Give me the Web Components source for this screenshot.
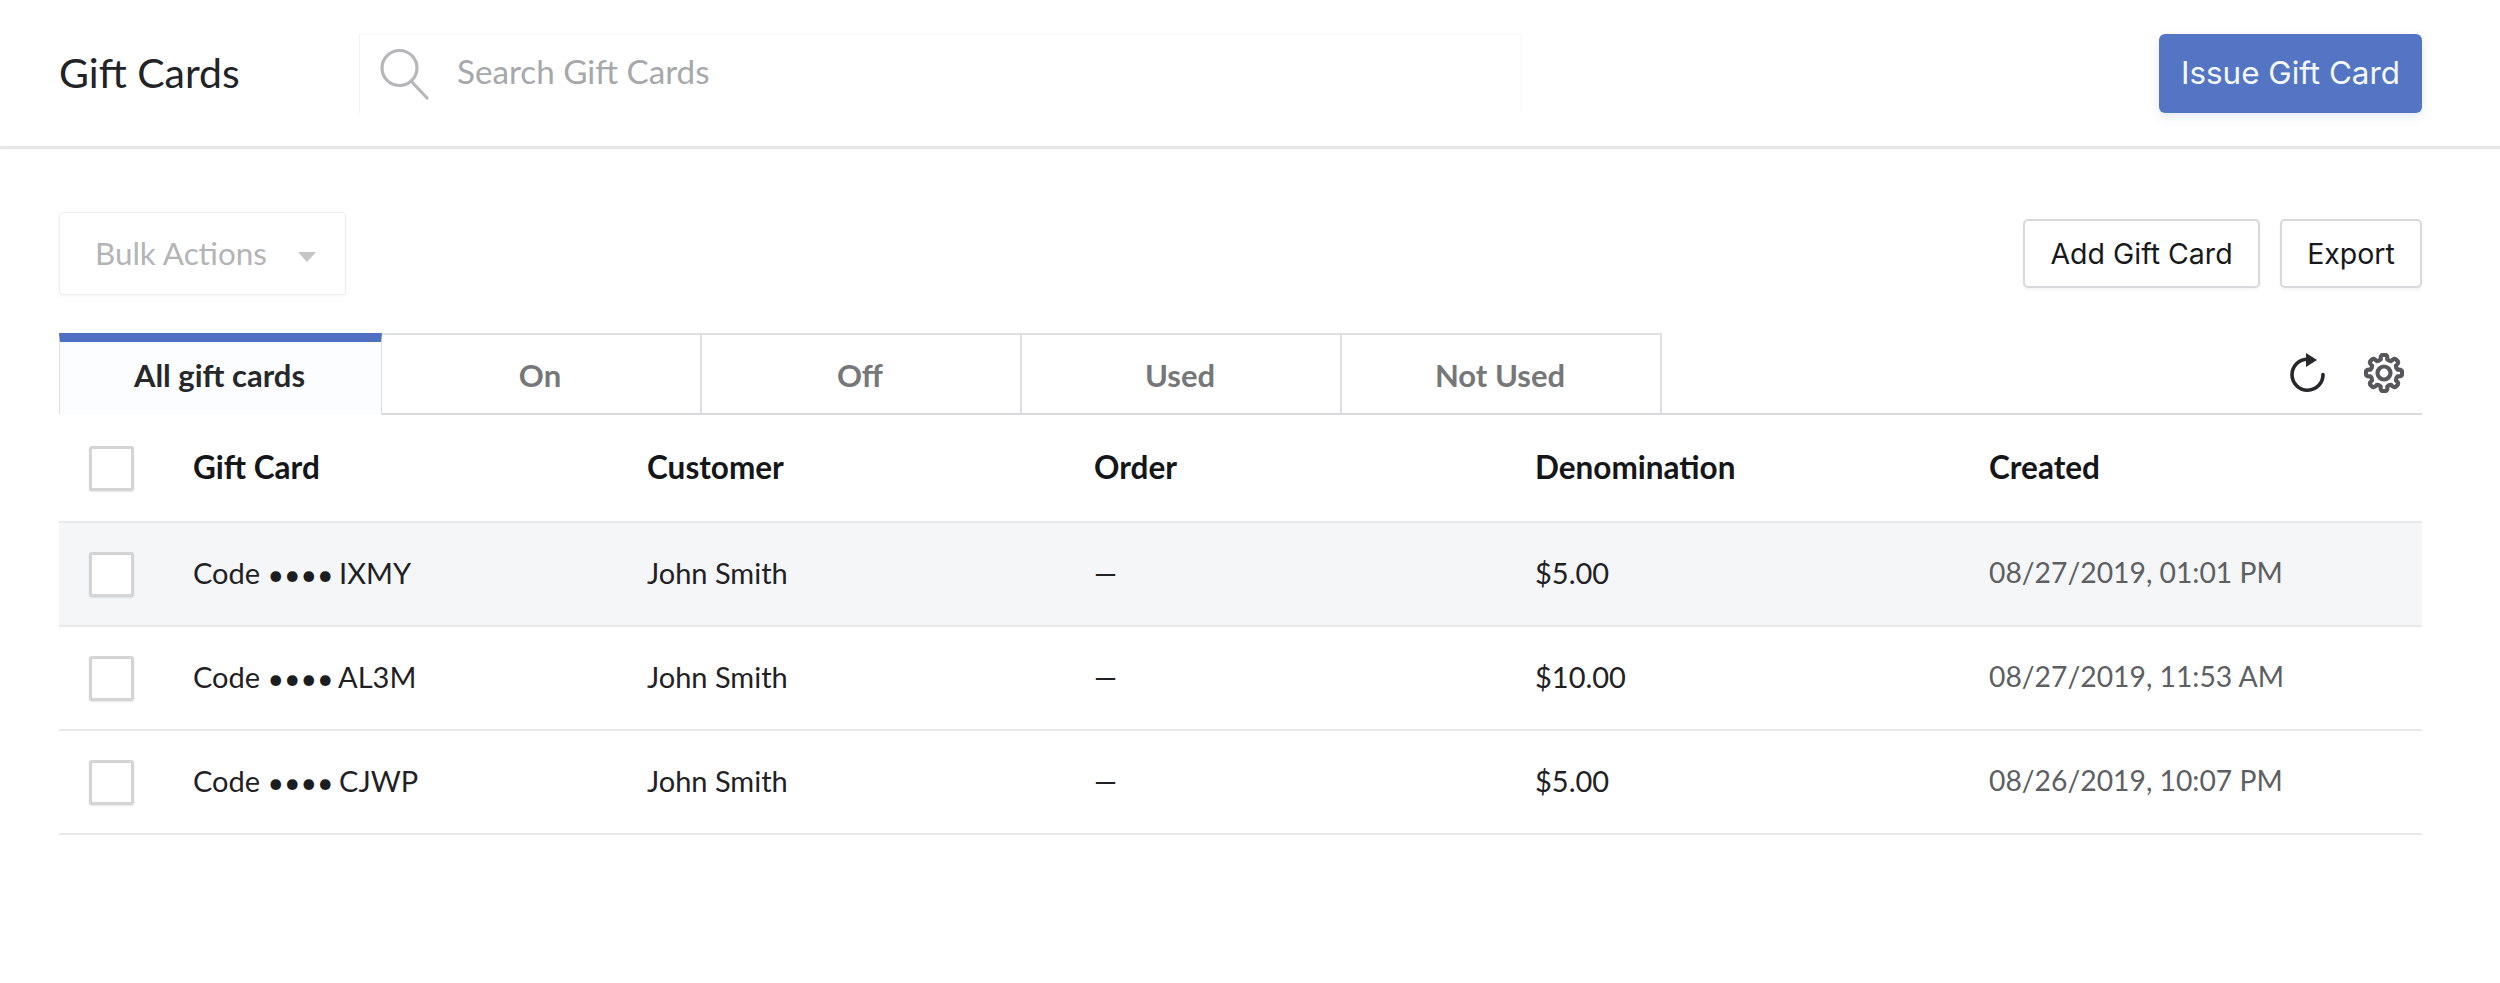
<!DOCTYPE html>
<html><head><meta charset="utf-8"><style>
html,body{margin:0;padding:0;background:#fff}
body{font-family:Lato,"Liberation Sans",sans-serif;width:2500px;height:983px;overflow:hidden}
</style></head><body>
<gc-header></gc-header>
<gc-toolbar></gc-toolbar>
<gc-tabs></gc-tabs>
<gc-table>
<gc-row head code="Gift Card" customer="Customer" order="Order" amount="Denomination" created="Created"></gc-row>
<gc-row hover code="IXMY" customer="John Smith" order="—" amount="$5.00" created="08/27/2019, 01:01 PM"></gc-row>
<gc-row code="AL3M" customer="John Smith" order="—" amount="$10.00" created="08/27/2019, 11:53 AM"></gc-row>
<gc-row code="CJWP" customer="John Smith" order="—" amount="$5.00" created="08/26/2019, 10:07 PM"></gc-row>
</gc-table>
<script>
function def(name,css,html){
  customElements.define(name,class extends HTMLElement{
    connectedCallback(){
      if(this.shadowRoot)return;
      const r=this.attachShadow({mode:'open'});
      r.innerHTML='<style>'+css+'</style>'+(typeof html==='function'?html(this):html);
    }
  });
}
const BTN_FONT='Inter,"Open Sans",sans-serif';
function gearPath(){
  const cx=20,cy=20,ro=18,ri=14,n=8;let d='';
  for(let i=0;i<n;i++){
    const s=2*Math.PI/n,a=i*s-Math.PI/2;
    const P=(r,t)=>(cx+r*Math.cos(t)).toFixed(2)+' '+(cy+r*Math.sin(t)).toFixed(2);
    if(i===0)d+='M'+P(ri,a-s*.30);
    d+='Q'+P(ro+1,a-s*.26)+' '+P(ro,a)+'Q'+P(ro+1,a+s*.26)+' '+P(ri,a+s*.30)+'Q'+P(ri-1.2,a+s*.5)+' '+P(ri,a+s*.70);
  }
  return d+'Z';
}
def('gc-header',`
:host{display:flex;box-sizing:border-box;height:149px;align-items:center;border-bottom:3px solid #e6e7e8;padding:0 78px 0 59px;box-shadow:0 1px 2px rgba(0,0,0,.03)}
h1{margin:0 0 2px;font:400 41px/1 Lato,sans-serif;color:#212326;width:300px;flex:none}
.search{box-sizing:border-box;width:1163px;height:80px;flex:none;display:flex;align-items:center;border:2px solid #fafafa;border-bottom:0;border-left:1px solid #f1f1f1;border-radius:2px 2px 0 0;padding-left:20px;color:#a6a8ab;font:400 33.2px/1 Lato,sans-serif;margin-top:-1px}
.search span{padding-bottom:3px}
svg{width:50px;height:52px;flex:none;margin-right:27px}
.sp{flex:1}
button{all:unset;box-sizing:border-box;width:263px;height:79px;background:#5475c4;color:#f5f8fd;border-radius:6px;text-align:center;font:400 31.4px/79px ${BTN_FONT};box-shadow:0 4px 12px rgba(60,80,140,.12);margin-top:1px}
`,`<h1>Gift Cards</h1>
<div class="search"><svg viewBox="0 0 50 52" fill="none" stroke="#b6b7b9" stroke-width="3.2" stroke-linecap="round"><circle cx="19.5" cy="20" r="17.5"/><path d="M31 33l16 17"/></svg><span>Search Gift Cards</span></div>
<div class="sp"></div><button>Issue Gift Card</button>`);
def('gc-toolbar',`
:host{display:flex;align-items:flex-start;justify-content:space-between;box-sizing:border-box;height:184px;padding:63px 78px 0 59px}
.bulk{box-sizing:border-box;width:287px;height:83px;border:1px solid #eceded;border-radius:4px;display:flex;align-items:center;padding-left:35px;color:#b3b4b6;font:400 31.4px/1 Lato,sans-serif;box-shadow:0 1px 3px rgba(0,0,0,.05)}
.car{width:0;height:0;border:9px solid transparent;border-top:10px solid #c4c5c7;border-bottom:0;margin-left:31px;margin-top:6px}
.r{display:flex;gap:20px;margin-top:7px}
button{all:unset;box-sizing:border-box;height:69px;background:#fff;border:2px solid #d7d9dc;border-radius:5px;text-align:center;color:#17191c;font:400 28.5px/65px ${BTN_FONT};box-shadow:0 2px 3px rgba(60,70,90,.06)}
.a{width:237px}.e{width:142px}
`,`<div class="bulk"><span>Bulk Actions</span><i class="car"></i></div>
<div class="r"><button class="a">Add Gift Card</button><button class="e">Export</button></div>`);
def('gc-tabs',`
:host{display:flex;box-sizing:border-box;height:82px;margin:0 78px 0 59px;position:relative;border-bottom:2px solid #d8dce0}
.t{box-sizing:border-box;width:320px;height:80px;border-top:2px solid #dfe2e5;border-right:2px solid #dbe0e4;display:flex;align-items:center;justify-content:center;color:#757779;font:700 31px/1 Lato,sans-serif;padding:3px 2px 0 0}
.t.on{width:323px;height:82px;border-top:9px solid #4f6fc2;border-left:1px solid #dbe0e4;border-right:1px solid #dbe0e4;color:#26282b;background:#fcfdfe;padding:0 2px 7px 0}
.ic{margin-left:auto;display:flex;gap:36px;padding:20px 18px 0 0;align-items:flex-start}
.ic svg{display:block;width:40px;height:40px}
`,`<div class="t on">All gift cards</div><div class="t">On</div><div class="t">Off</div><div class="t">Used</div><div class="t">Not Used</div>
<div class="ic">
<svg viewBox="0 0 40 40" fill="none"><path d="M35 21.5A15.5 15.5 0 1 1 19.5 6.2" stroke="#26282b" stroke-width="3.6" stroke-linecap="round"/><path d="M18 0l11 7-11 7z" fill="#26282b"/></svg>
<svg viewBox="0 0 40 40" fill="none" stroke="#55575a" stroke-width="4.2" stroke-linejoin="round"><path d="${gearPath()}"/><circle cx="20" cy="20" r="6.5"/></svg>
</div>`);
def('gc-table',`:host{display:block;margin:0 78px 0 59px}`,`<slot></slot>`);
def('gc-row',`
:host{display:grid;grid-template-columns:134px 454px 447px 441px 454px 1fr;box-sizing:border-box;height:104px;align-items:center;border-bottom:2px solid #e7e9eb;color:#1f2124;font:400 29px/1 Lato,sans-serif}
:host([head]){height:108px;font-weight:700;color:#141619;font-size:31.5px}
:host([hover]){background:#f4f6f8}
.cb{box-sizing:border-box;width:45px;height:45px;margin-left:30px;background:#fff;border:3px solid #d2d4d6;border-radius:3px;box-shadow:0 1px 2px rgba(0,0,0,.1)}
.c{color:#5d6063;font-size:28.3px}
:host([head]) .c{color:inherit;font-size:inherit}
.v{padding-bottom:4px}
:host([head]) .v{padding-bottom:0}
.d{font-size:28.5px;line-height:0;vertical-align:-1px;color:#1b1d20;margin-right:-2px}
`,h=>{
  const c=h.getAttribute('code');
  const code=h.hasAttribute('head')?c:'Code <span class="d">••••</span> '+c;
  return `<div class="cb"></div><div class="v">${code}</div><div class="v">${h.getAttribute('customer')}</div><div class="v">${h.getAttribute('order')}</div><div class="v">${h.getAttribute('amount')}</div><div class="v c">${h.getAttribute('created')}</div>`;
});
</script>
</body></html>
